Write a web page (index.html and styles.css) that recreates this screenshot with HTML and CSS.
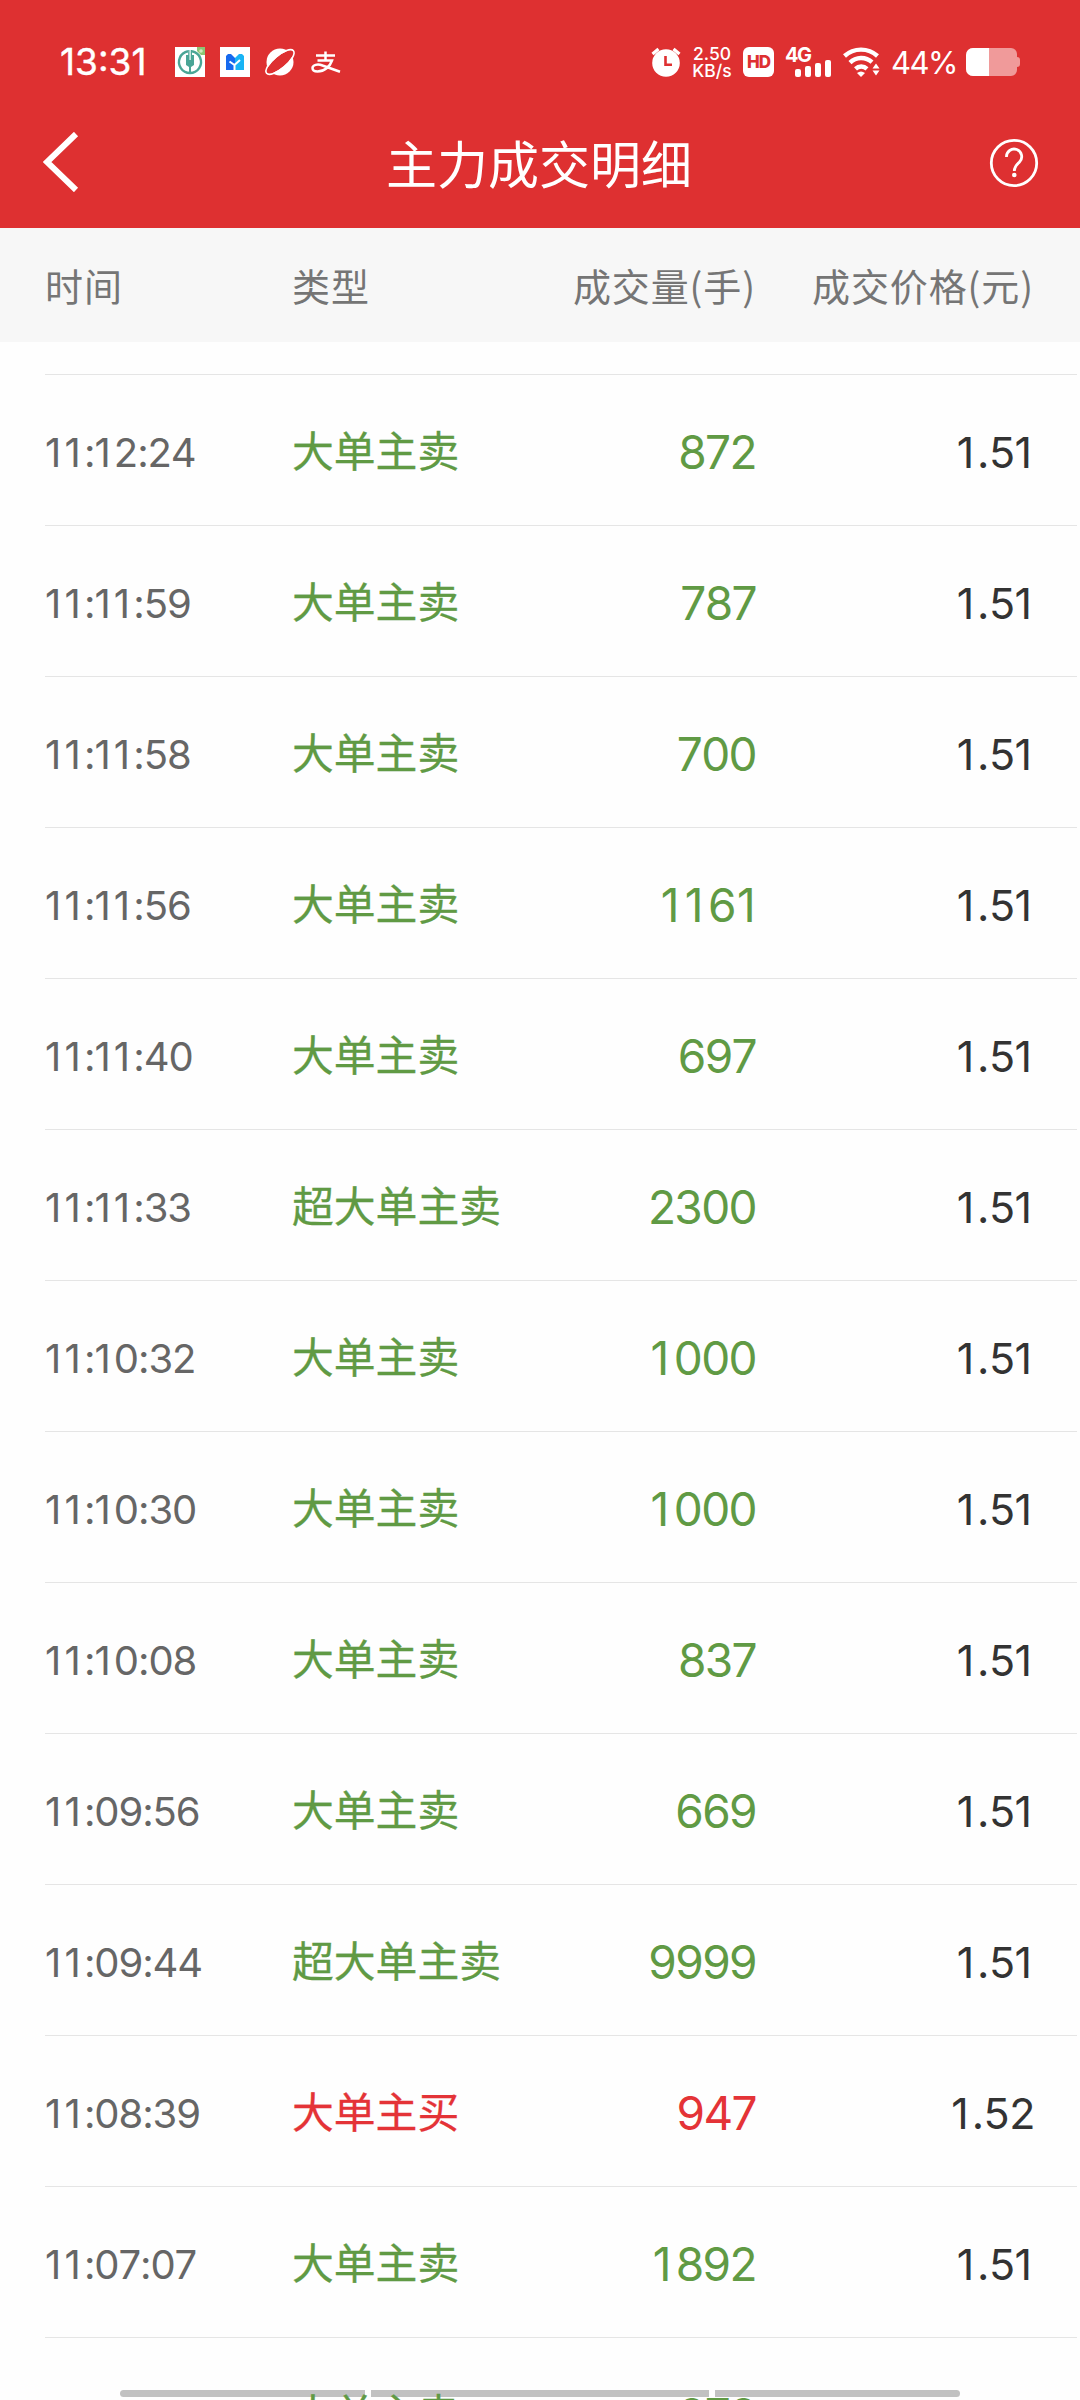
FILE: index.html
```html
<!DOCTYPE html>
<html lang="zh-CN">
<head>
<meta charset="utf-8">
<title>主力成交明细</title>
<link rel="stylesheet" href="styles.css">
</head>
<body>
<div class="screen">
  <header class="top">
    <div class="status">
      <span class="clock">13:31</span>
      <div class="apps">
        <svg class="app" width="30" height="30" viewBox="0 0 30 30"><path fill="#fff" d="M0 0h30v30H0z"/><path fill="#8cc474" d="M22 0h8v8h-4l-4-4z"/><circle cx="26" cy="4" r="1.8" fill="#cfe8c0"/><g fill="none" stroke="#4aa596"><path stroke-width="2.4" d="M13 4.200a11 11 0 1 0 4 0"/><path stroke-width="2" d="M15 18v9"/></g><path fill="#4aa596" d="M11 8h2.200V3h1.300v10h1.200V3H17v5h2v10l-3 2h-2l-3-2z"/></svg>
        <svg class="app" width="30" height="30" viewBox="0 0 30 30"><path fill="#fff" d="M0 0h30v30H0z"/><path fill="#1769ee" d="M8 7h3l4 4v12H6V9z"/><path fill="#18b4f5" d="M22 7h-3l-4 4v12h9V9z"/><path fill="none" stroke="#fff" stroke-width="2" d="M9.500 14.500l5 3.500 5.500-5M14.500 18v6"/></svg>
        <svg class="app" width="30" height="30" viewBox="0 0 30 30"><circle cx="15" cy="15" r="13.500" fill="#fff"/><ellipse cx="15" cy="15" rx="17" ry="5.500" transform="rotate(-40 15 15)" fill="#de3031"/><ellipse cx="15" cy="15" rx="17.500" ry="6.500" transform="rotate(-40 15 15)" fill="none" stroke="#fff" stroke-width="1.600"/></svg>
        <svg class="app" width="30" height="30" viewBox="0 0 30 30"><g fill="none" stroke="#fff" stroke-width="2.500"><path d="M6 8.500h19M15.500 4.500v9M7.500 13.500h14.500c-2 6-7.500 11-14.500 11-3 0-5-1.500-5-3.500 0-3 5-4.500 10-2.500l17.500 6.200"/></g></svg>
      </div>
      <div class="system">
        <svg class="alarm" width="30" height="30" viewBox="0 0 30 30"><circle cx="15" cy="16" r="13.800" fill="#fff"/><path fill="none" stroke="#fff" stroke-width="3.200" d="M1.500 7l6-5M28.500 7l-6-5"/><path fill="none" stroke="#de3031" stroke-width="2.600" d="M14.500 9v8.700h6.500"/></svg>
        <span class="speed"><span>2.50</span><span>KB/s</span></span>
        <span class="hd">HD</span>
        <span class="cell"><span class="net">4G</span><svg class="bars" width="36" height="17" viewBox="0 0 36 17" fill="#fff"><rect y="9" width="6" height="8" rx="2"/><rect x="10" y="6" width="6" height="11" rx="2"/><rect x="20" y="3" width="6" height="14" rx="2"/><rect x="30" width="6" height="17" rx="2"/></svg></span>
        <svg class="wifi" width="37" height="30" viewBox="0 0 37 30"><g fill="none" stroke="#fff" stroke-width="4.400"><path d="M1.500 9a24.500 24.500 0 0 1 33 0"/><path d="M7 15.600a16 16 0 0 1 22-.5"/><path d="M12.500 21.800a8.500 8.500 0 0 1 11.500 0"/></g><path fill="#fff" d="M14 26q4-3 8 0l-4 4zM29.500 21.500l3.500-5 3.500 5zM29.500 23.500l3.500 5 3.500-5z"/></svg>
        <span class="pct">44%</span>
        <svg class="battery" width="54" height="28" viewBox="0 0 54 28"><path fill="#f09a9a" d="M7 0h38a6 6 0 0 1 6 6v3q3 0 3 3v4q0 3-3 3v3a6 6 0 0 1-6 6H7a7 7 0 0 1-7-7V7a7 7 0 0 1 7-7z"/><path fill="#fff" d="M7 0h16v28H7a7 7 0 0 1-7-7V7a7 7 0 0 1 7-7z"/></svg>
      </div>
    </div>
    <nav class="bar">
      <svg class="back" width="36" height="60" viewBox="0 0 36 60"><path fill="none" stroke="#fff" stroke-width="6" d="M33 2L4 30l29 28"/></svg>
      <h1 class="title">主力成交明细</h1>
      <svg class="help" width="50" height="50" viewBox="0 0 50 50"><circle cx="25" cy="25" r="22.700" fill="none" stroke="#fff" stroke-width="2.800"/><path fill="none" stroke="#fff" stroke-width="2.800" d="M17.500 19a7.600 7.600 0 1 1 13 5c-3 3-5.200 4.500-5.200 9"/><circle cx="25.300" cy="37" r="2.300" fill="#fff"/></svg>
    </nav>
  </header>
  <div class="grid heads"><span>时间</span><span>类型</span><span class="num">成交量(手)</span><span class="num">成交价格(元)</span></div>
  <div class="handle"><i></i><i></i><i></i></div>
  <main class="list" id="list"></main>
</div>
<script src="rows.js"></script>
</body>
</html>
```
FILE: styles.css
```css
* { box-sizing: border-box; }
body { margin: 0; background: #fefefe; font-family: Inter, "Noto Sans CJK SC", sans-serif; }
.screen { position: relative; width: 1080px; height: 2400px; overflow: hidden; display: flex; flex-direction: column; }
.top { height: 228px; flex: none; background: #de3031; color: #fff; }
.status { height: 124px; padding: 0 60px 0 60px; display: flex; align-items: center; }
.clock { width: 115px; font-size: 37px; line-height: 40px; font-weight: 400; font-kerning: none; white-space: nowrap; -webkit-text-stroke: .4px #fff; }
.apps { display: flex; gap: 15px; padding-bottom: 1px; }
.app { overflow: visible; display: block; }
.system { margin-left: auto; display: flex; align-items: center; }
.alarm { margin-right: 12px; }
.speed { width: 38px; display: flex; flex-direction: column; align-items: center; font-size: 17.500px; line-height: 17px; font-weight: 500; margin-right: 12px; }
.hd { width: 31px; height: 30px; border-radius: 6px; background: #fff; color: #de3031; font-size: 17px; line-height: 30px; font-weight: 800; text-align: center; letter-spacing: -1px; margin-right: 11px; }
.cell { width: 46px; height: 30px; position: relative; margin-right: 12px; }
.net { position: absolute; left: 0; top: -2px; font-size: 20px; line-height: 20px; font-weight: 700; letter-spacing: -1.500px; }
.bars { position: absolute; right: 0; bottom: 0; }
.wifi { margin-right: 11px; }
.pct { width: 65px; font-size: 31px; letter-spacing: -1.500px; white-space: nowrap; margin-right: 10px; }
.bar { height: 104px; padding: 0 41px 0 43px; display: flex; justify-content: space-between; }
.back { margin-top: 8px; }
.title { margin: 0 0 0 10px; font-size: 51px; line-height: 84px; font-weight: 400; }
.help { margin-top: 14px; }
.grid { display: grid; grid-template-columns: 247px 250px 214px 1fr; padding: 0 46px 0 45px; align-items: center; }
.num { text-align: right; }
.heads { height: 114px; flex: none; background: #f7f7f7; color: #757575; font-size: 38px; letter-spacing: .9px; font-family: "Noto Sans CJK SC", sans-serif; padding-bottom: 2px; }
.list { position: relative; margin-top: 32px; }
.row { height: 151px; white-space: nowrap; background: linear-gradient(#e5e5e5, #e5e5e5) 45px 0 / 1032px 1px no-repeat; }
.time { color: #666; font-size: 40px; font-kerning: none; padding-top: 6px; letter-spacing: -1.100px; }
.time .one { padding-right: 4.300px; }
.kind, .vol { color: #609a44; }
.kind { font-size: 41.800px; padding-bottom: 2px; -webkit-text-stroke: .3px currentColor; }
.vol { font-size: 46px; font-kerning: none; letter-spacing: -1.600px; padding-top: 4px; }
.vol .one { padding: 0 6px 0 1px; }
.vol .end { padding: 0 2px 0 2px; }
.price { color: #333; font-size: 43px; font-kerning: none; padding-top: 4px; letter-spacing: -.5px; margin-right: -1px; }
.price .one { padding-right: 3.400px; }
.buy .kind, .buy .vol { color: #e43337; }
.handle { position: absolute; left: 120px; top: 2390px; width: 840px; height: 7px; display: grid; grid-template-columns: 245px 338px 245px; gap: 6px; border-radius: 4px; overflow: hidden; }
.handle i { background: #c1c1c1; }
```
FILE: rows.js
```js
const trades = [
  ["11:12:24", "大单主卖", "872", "1.51"],
  ["11:11:59", "大单主卖", "787", "1.51"],
  ["11:11:58", "大单主卖", "700", "1.51"],
  ["11:11:56", "大单主卖", "1161", "1.51"],
  ["11:11:40", "大单主卖", "697", "1.51"],
  ["11:11:33", "超大单主卖", "2300", "1.51"],
  ["11:10:32", "大单主卖", "1000", "1.51"],
  ["11:10:30", "大单主卖", "1000", "1.51"],
  ["11:10:08", "大单主卖", "837", "1.51"],
  ["11:09:56", "大单主卖", "669", "1.51"],
  ["11:09:44", "超大单主卖", "9999", "1.51"],
  ["11:08:39", "大单主买", "947", "1.52"],
  ["11:07:07", "大单主卖", "1892", "1.51"],
  ["", "大单主卖", "878", "1.51"]
];

// The digit 1 is narrow, so it gets extra side space.
const digits = s => s.replace(/1/g, (d, i) =>
  `<span class="one${i === s.length - 1 ? " end" : ""}">${d}</span>`);

document.getElementById("list").innerHTML = trades.map(([t, k, v, p]) =>
  `<div class="grid row${k.endsWith("买") ? " buy" : ""}"><span class="time">${digits(t)}</span><span class="kind">${k}</span><span class="num vol">${digits(v)}</span><span class="num price">${digits(p)}</span></div>`
).join("");
```
